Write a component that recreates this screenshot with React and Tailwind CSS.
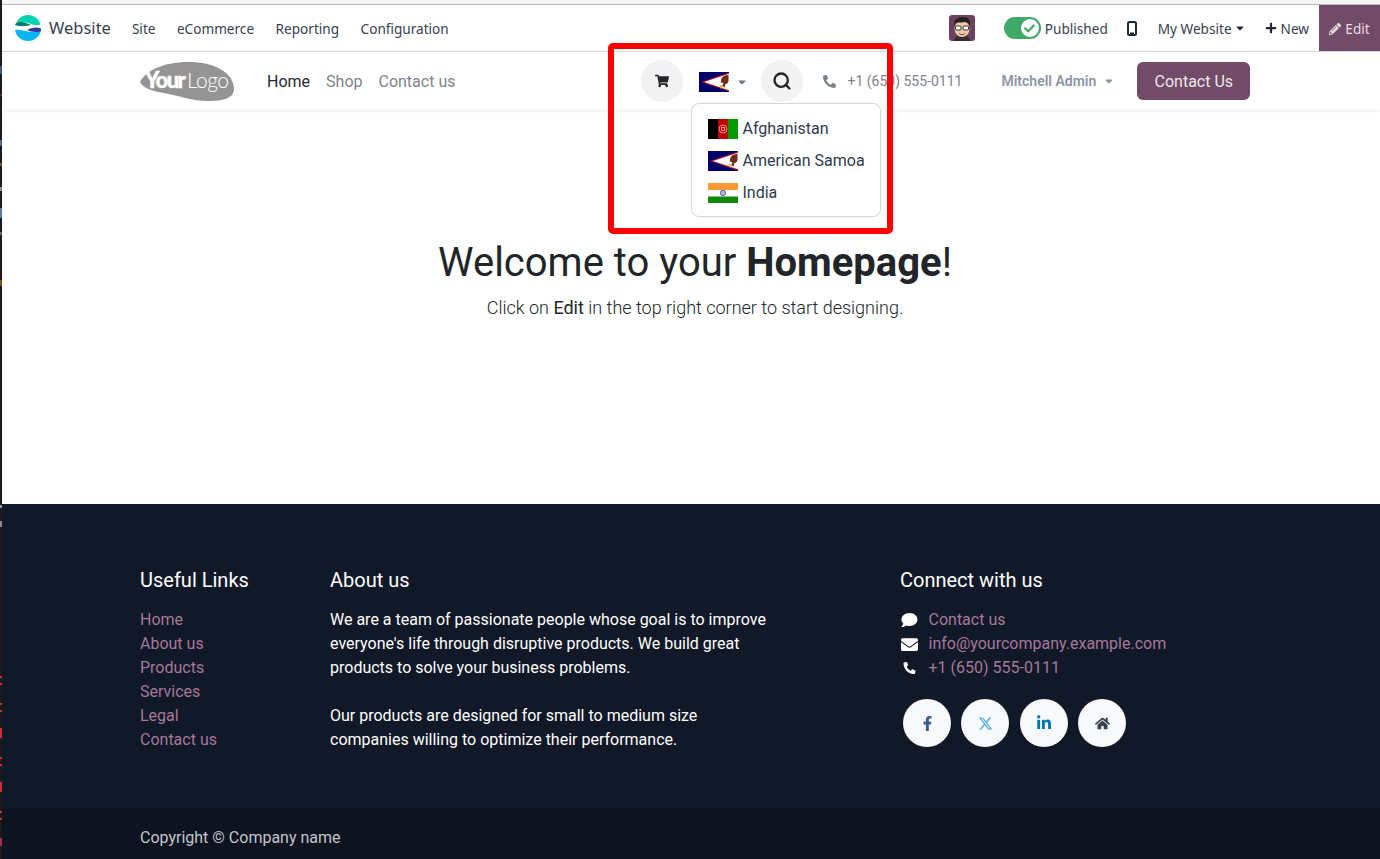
import { FaShoppingCart, FaPhone, FaPhoneAlt, FaComment, FaEnvelope, FaFacebookF, FaLinkedinIn, FaHome, FaPlus, FaPencilAlt, FaCheck, FaCaretDown } from 'react-icons/fa';
import { FaXTwitter } from 'react-icons/fa6';
import { Search } from 'lucide-react';

const usefulLinks = ['Home', 'About us', 'Products', 'Services', 'Legal', 'Contact us'];

// bits of the window behind the page, showing at the left edge
const stripMarks = [
  [66, 8, '#3b5a80'], [94, 2, '#6b2a2a'], [140, 6, '#4a6a90'], [163, 3, '#7a5030'], [187, 4, '#888'], [208, 10, '#5a7a9a'],
  [232, 3, '#666'], [280, 6, '#8a4a20'], [505, 3, '#999'], [521, 6, '#888'],
  [676, 2, '#d03030'], [683, 2, '#d03030'], [703, 2, '#d03030'], [710, 2, '#d03030'], [728, 10, '#d03030'],
  [757, 2, '#d03030'], [764, 2, '#d03030'], [782, 10, '#d03030'], [811, 2, '#d03030'], [818, 2, '#d03030'], [838, 8, '#a03040'],
];

function WebsiteLogo() {
  return (
    <svg width="26" height="26" viewBox="0 0 26 26" className="shrink-0">
      <path d="M1 9.500C2 4 7 0 13 0s11 4 12.500 9.500C22 11 19 10 16 9c-5-2-10-2-15 .5z" fill="#00d2b4" />
      <path d="M0 10c1-3 5-3.500 9-2.500 2 .5 5 1.500 7 2.500-5 1-10 2-16 0z" fill="#0b7a6c" />
      <path d="M0 15c5-1 8 1 13 1.500 5 .5 9-.5 13-1.500-1 6-6 11-13 11S1 21 0 15z" fill="#06b6f0" />
      <path d="M12 15c4-2 9-3.500 14-1.500 0 1-.2 2-.5 3-4 1-9 .5-13.500-1.500z" fill="#3730a3" />
    </svg>
  );
}

function YourLogo() {
  return (
    <svg width="96" height="41" viewBox="0 0 96 41" className="shrink-0">
      <path d="M1 21C6 11 22 1 50 1c24 0 45 10 45 27 0 9-10 12-26 12-16 0-28-5-44-8C12 30 3 26 1 21z" fill="#949494" />
      <text x="6" y="27" fontFamily="Lato, sans-serif" fontWeight="900" fontSize="22" letterSpacing="-1.500" stroke="#fff" strokeWidth=".4" fill="#fff">Your</text>
      <text x="48" y="27" fontFamily="Lato, sans-serif" fontWeight="300" fontSize="21" letterSpacing="-.5" fill="#fff">Logo</text>
    </svg>
  );
}

function Avatar() {
  return (
    <svg width="26" height="26" viewBox="0 0 26 26" className="shrink-0">
      <rect width="26" height="26" rx="3" fill="#6d4160" />
      <path d="M5 26c1-5 4-6 8-6s7 1 8 6z" fill="#3b2a3a" />
      <ellipse cx="13" cy="14" rx="7.500" ry="8" fill="#f0c9a5" />
      <path d="M5 11C4 5 9 2 14 2c5 0 8 3 7 9-1-3-3-4-5-4-4 1-8 0-9 1-1 1-2 2-2 3z" fill="#23201f" />
      <rect x="6.500" y="11" width="5.500" height="4" rx="1" fill="#fff" stroke="#333" strokeWidth="1" />
      <rect x="14" y="11" width="5.500" height="4" rx="1" fill="#fff" stroke="#333" strokeWidth="1" />
      <path d="M10 18.500c2 1.500 4 1.500 6 0" stroke="#8a3b2e" strokeWidth="1" fill="none" />
    </svg>
  );
}

function SamoaFlag() {
  return (
    <svg width="30" height="20" viewBox="0 0 30 20" className="shrink-0">
      <rect width="30" height="20" fill="#00006a" />
      <path d="M2 10L30 .5v19z" fill="#bd1021" />
      <path d="M5 10L30 1.700v16.600z" fill="#fff" />
      <path d="M29.500 3c-3 0-6 1-7 3.500-.8 2-.2 3-1 4 1 .8 2 .2 3 1l-1.500 2.500 2.500 1.500 1-3.500c2 0 2.500-2 3-3z" fill="#6e2c14" />
      <path d="M20 12.500l4.500 1.500-2 3z" fill="#e0b860" />
    </svg>
  );
}

function AfghanFlag() {
  return (
    <svg width="30" height="20" viewBox="0 0 30 20" className="shrink-0">
      <rect width="10" height="20" fill="#000" />
      <rect x="10" width="10" height="20" fill="#be0000" />
      <rect x="20" width="10" height="20" fill="#009900" />
      <circle cx="15" cy="10" r="4" fill="none" stroke="#f0b0a0" strokeWidth=".8" />
      <rect x="13.500" y="8.500" width="3" height="3" fill="none" stroke="#f0c0b0" strokeWidth=".8" />
    </svg>
  );
}

function IndiaFlag() {
  return (
    <svg width="30" height="20" viewBox="0 0 30 20" className="shrink-0">
      <rect width="30" height="7" fill="#ff9933" />
      <rect y="7" width="30" height="6.500" fill="#fff" />
      <rect y="13.500" width="30" height="6.500" fill="#138808" />
      <circle cx="15" cy="10" r="2.700" fill="#b4b4dc" stroke="#000080" strokeWidth=".5" />
    </svg>
  );
}

function AdminBar() {
  return (
    <div className="h-[47px] flex items-stretch bg-white border-b border-[#d8d8d8] text-[13.600px] text-[#374151] font-['Noto_Sans',sans-serif]">
      <div className="flex items-center pl-[13px] flex-1">
        <WebsiteLogo />
        <span className="ml-2 text-[16.500px]">Website</span>
        <span className="ml-[21px] mt-[2px]">Site</span>
        <span className="ml-[21.500px] mt-[2px]">eCommerce</span>
        <span className="ml-[21.500px] mt-[2px]">Reporting</span>
        <span className="ml-[21.500px] mt-[2px]">Configuration</span>
      </div>
      <div className="flex items-center">
        <Avatar />
        <div className="ml-[29px] w-[37px] h-[22px] rounded-full bg-[#3fa968] relative">
          <div className="absolute right-[2px] top-[2px] w-[18px] h-[18px] rounded-full bg-white flex items-center justify-center">
            <FaCheck className="text-[#3fa968] text-[11px]" />
          </div>
        </div>
        <span className="ml-1 mt-[2px]">Published</span>
        <svg width="10" height="15" viewBox="0 0 10 15" className="ml-[19px]">
          <rect x="1" y="1" width="8" height="13" rx="1.500" fill="#fff" stroke="#1f2937" strokeWidth="2" />
          <rect x="3" y="11.500" width="4" height="1.500" fill="#1f2937" />
        </svg>
        <span className="ml-[21px] mt-[2px]">My Website</span>
        <FaCaretDown className="ml-[2px] text-[12px] text-[#1f2937]" />
        <FaPlus className="ml-[19px] text-[12px] text-[#1f2937]" />
        <span className="ml-1 mt-[2px]">New</span>
        <div className="ml-[10px] pt-[2px] w-[61px] self-stretch bg-[#714b67] text-[#e5dde3] flex items-center justify-center gap-1">
          <FaPencilAlt className="text-[12px]" />
          <span>Edit</span>
        </div>
      </div>
    </div>
  );
}

function SiteNav() {
  return (
    <div className="relative z-10 h-[58px] flex items-center bg-white shadow-[0_1px_3px_rgba(0,0,0,0.08)] pl-[137px] text-[16px]">
      <YourLogo />
      <span className="ml-[32px] mt-[2px] text-[#1f2937]">Home</span>
      <span className="ml-[16px] mt-[2px] text-[#7d838c]">Shop</span>
      <span className="ml-[16px] mt-[2px] text-[#7d838c]">Contact us</span>

      <div className="ml-[186px] w-[42px] h-[42px] rounded-full bg-[#f2f2f2] flex items-center justify-center">
        <FaShoppingCart className="text-[14px] text-[#212529]" />
      </div>
      <div className="relative ml-[16px] mt-[2px] flex items-center">
        <SamoaFlag />
        <FaCaretDown className="ml-[7px] text-[12px] text-[#6b7280]" />
        {/* open language menu */}
        <div className="absolute left-[-8px] top-[31px] w-[190px] h-[114px] bg-white border border-[#d6d6d6] rounded-lg py-[9px] px-4 text-[#2f3b4c] whitespace-nowrap">
          <div className="h-[32px] flex items-center gap-1"><AfghanFlag />Afghanistan</div>
          <div className="h-[32px] flex items-center gap-1"><SamoaFlag />American Samoa</div>
          <div className="h-[32px] flex items-center gap-1"><IndiaFlag />India</div>
        </div>
      </div>
      <div className="ml-[13px] w-[42px] h-[42px] rounded-full bg-[#f2f2f2] flex items-center justify-center">
        <Search size={20} strokeWidth={2.8} className="text-[#212529]" />
      </div>
      <FaPhone className="ml-[20px] text-[13px] text-[#7d838c] scale-x-[-1]" />
      <span className="ml-[11px] text-[14px] text-[#7d838c]">+1 (650) 555-0111</span>
      <span className="ml-[39px] text-[14px] font-semibold text-[#8b95a3]">Mitchell Admin</span>
      <FaCaretDown className="ml-[7px] text-[12px] text-[#8b95a3]" />
      <div className="ml-[22px] pt-[2px] w-[113px] h-[38px] rounded-md bg-[#714b67] text-[#eee7ec] flex items-center justify-center">
        Contact Us
      </div>
    </div>
  );
}

function Footer() {
  return (
    <footer className="bg-[#111827] text-white">
      <div className="h-[304px] pl-[138px] pt-[63px] flex text-[16px] leading-[24px]">
        <div className="w-[190px]">
          <h5 className="text-[20px] leading-[26px] mb-[15px]">Useful Links</h5>
          {usefulLinks.map((l) => (
            <div key={l} className="text-[#a5799a]">{l}</div>
          ))}
        </div>
        <div className="w-[570px]">
          <h5 className="text-[20px] leading-[26px] mb-[15px]">About us</h5>
          <p className="w-[450px]">We are a team of passionate people whose goal is to improve everyone's life through disruptive products. We build great products to solve your business problems.</p>
          <p className="w-[420px] mt-[24px]">Our products are designed for small to medium size companies willing to optimize their performance.</p>
        </div>
        <div>
          <h5 className="text-[20px] leading-[26px] mb-[15px]">Connect with us</h5>
          <div className="flex items-center text-[#a5799a]"><FaComment className="w-[17px] ml-[1px] mr-[10.500px] text-white text-[16px]" />Contact us</div>
          <div className="flex items-center text-[#a5799a]"><FaEnvelope className="w-[17px] ml-[1px] mr-[10.500px] text-white text-[17px]" />info@yourcompany.example.com</div>
          <div className="flex items-center text-[#a5799a]"><FaPhoneAlt className="w-[17px] ml-[1px] mr-[10.500px] text-white text-[12px]" />+1 (650) 555-0111</div>
          <div className="flex gap-[10.400px] ml-[3px] mt-[19px]">
            <div className="w-[48px] h-[48px] rounded-full bg-[#f8f9fa] flex items-center justify-center"><FaFacebookF className="text-[15px] text-[#3b5998]" /></div>
            <div className="w-[48px] h-[48px] rounded-full bg-[#f8f9fa] flex items-center justify-center"><FaXTwitter className="text-[15px] text-[#55acee]" /></div>
            <div className="w-[48px] h-[48px] rounded-full bg-[#f8f9fa] flex items-center justify-center"><FaLinkedinIn className="text-[16px] text-[#0077b5]" /></div>
            <div className="w-[48px] h-[48px] rounded-full bg-[#f8f9fa] flex items-center justify-center"><FaHome className="text-[15px] text-[#374151]" /></div>
          </div>
        </div>
      </div>
      <div className="h-[51px] bg-[#0d1420] pl-[138px] pt-[8px] flex items-center text-[16px] text-[#c2c5ca]">
        Copyright © Company name
      </div>
    </footer>
  );
}

export default function App() {
  return (
    <div className="h-[859px] overflow-hidden flex font-['Roboto',sans-serif] bg-white relative">
      <svg width="2" height="859" viewBox="0 0 2 859" className="shrink-0 bg-[#1c1c20]">
        {stripMarks.map(([y, h, c]) => <rect key={y} x="0" y={y} width="2" height={h} fill={c} />)}
      </svg>
      <div className="flex-1 min-w-0">
        <div className="h-[5px] bg-[#f5f5f5] border-b border-[#b9b9b9]" />
        <AdminBar />
        <SiteNav />
        <main className="h-[394px] pt-[125px] flex flex-col items-center pl-[8px] text-[#212529]">
          <h1 className="text-[40px] leading-[56px] font-normal">Welcome to your <b className="font-bold">Homepage</b>!</h1>
          <p className="text-[18px] leading-[27px] mt-[3px] font-light">Click on <b className="font-normal">Edit</b> in the top right corner to start designing.</p>
        </main>
        <Footer />
      </div>
      {/* red annotation box from the screenshot */}
      <div className="absolute left-[608px] top-[43px] w-[285px] h-[191px] border-[6px] border-[#ff0000] rounded-[5px] z-20 pointer-events-none" />
    </div>
  );
}
